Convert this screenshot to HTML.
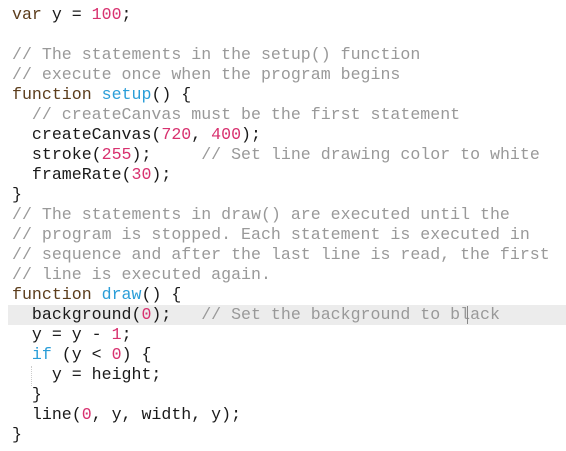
<!DOCTYPE html>
<html><head><style>
html,body{margin:0;padding:0;background:#fff;width:566px;height:451px;overflow:hidden}
pre{margin:0;position:absolute;left:12px;top:5px;font-family:"Liberation Mono",monospace;font-size:16.6px;line-height:20px;color:#1a1a1a}
.k{color:#5c3d1c}.n{color:#d8316f}.f{color:#2b9ed8}.c{color:#999}
.hl{position:absolute;left:8px;top:305px;width:558px;height:20px;background:#ececec}
.cur{position:absolute;left:467px;top:306px;width:1px;height:18px;background:#888}
.g{position:absolute;left:31px;top:366px;height:20px;border-left:1px dotted #ccc}
</style></head><body>
<div class="hl"></div><div class="g"></div>
<pre><span class="k">var</span> y = <span class="n">100</span>;

<span class="c">// The statements in the setup() function</span>
<span class="c">// execute once when the program begins</span>
<span class="k">function</span> <span class="f">setup</span>() {
  <span class="c">// createCanvas must be the first statement</span>
  createCanvas(<span class="n">720</span>, <span class="n">400</span>);
  stroke(<span class="n">255</span>);     <span class="c">// Set line drawing color to white</span>
  frameRate(<span class="n">30</span>);
}
<span class="c">// The statements in draw() are executed until the</span>
<span class="c">// program is stopped. Each statement is executed in</span>
<span class="c">// sequence and after the last line is read, the first</span>
<span class="c">// line is executed again.</span>
<span class="k">function</span> <span class="f">draw</span>() {
  background(<span class="n">0</span>);   <span class="c">// Set the background to black</span>
  y = y - <span class="n">1</span>;
  <span class="f">if</span> (y &lt; <span class="n">0</span>) {
    y = height;
  }
  line(<span class="n">0</span>, y, width, y);
}</pre>
<div class="cur"></div>
</body></html>
